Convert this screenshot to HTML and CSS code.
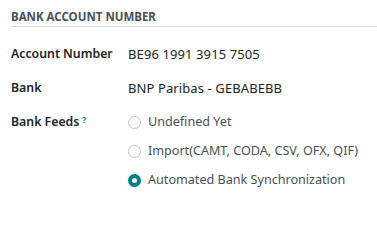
FILE: index.html
```html
<!DOCTYPE html>
<html>
<head>
<meta charset="utf-8">
<link rel="stylesheet" href="styles.css">
</head>
<body>
<div class="group">
  <div class="group-title">Bank Account Number</div>
  <div class="fields">
    <div class="label">Account Number</div>
    <div class="value">BE96 1991 3915 7505</div>
    <div class="label">Bank</div>
    <div class="value">BNP Paribas - GEBABEBB</div>
    <div class="label">Bank Feeds<sup class="help">?</sup></div>
    <div class="radios">
      <label class="radio"><span class="dot"></span><span class="rtext">Undefined Yet</span></label>
      <label class="radio"><span class="dot"></span><span class="rtext">Import(CAMT, CODA, CSV, OFX, QIF)</span></label>
      <label class="radio"><span class="dot checked"></span><span class="rtext">Automated Bank Synchronization</span></label>
    </div>
  </div>
</div>
</body>
</html>
```

FILE: styles.css
```css
html, body {
  margin: 0;
  padding: 0;
  background: #ffffff;
}
body {
  font-family: "Noto Sans", "Open Sans", sans-serif;
  color: #212529;
  font-size: 13px;
}
.group {
  padding: 10px 0 0 11px;
}
.group-title {
  font-size: 11.5px;
  font-weight: 700;
  text-transform: uppercase;
  color: #495057;
  line-height: 14px;
  padding-bottom: 2px;
  border-bottom: 1px solid #dee2e6;
}
.fields {
  display: grid;
  grid-template-columns: 117px 1fr;
  padding-top: 18px;
  row-gap: 16px;
}
.label {
  font-weight: 600;
  font-size: 12.3px;
  line-height: 18px;
}
.value {
  line-height: 18px;
  letter-spacing: 0.1px;
}
.help {
  color: #0180a5;
  font-size: 8px;
  font-weight: 700;
  margin-left: 3px;
  vertical-align: top;
  position: relative;
  top: -2px;
}
.radios {
  display: flex;
  flex-direction: column;
  gap: 11px;
}
.radio {
  display: flex;
  align-items: center;
  gap: 7px;
  line-height: 18px;
  color: #495057;
  font-size: 12.6px;
}
.dot {
  width: 11px;
  height: 11px;
  border: 1px solid #bfc3c7;
  border-radius: 50%;
  box-sizing: content-box;
  flex: none;
}
.dot.checked {
  width: 5px;
  height: 5px;
  border: 4px solid #017e84;
  background: #ffffff;
  box-shadow: 0 0 0 2px #eef6f6;
}
```
